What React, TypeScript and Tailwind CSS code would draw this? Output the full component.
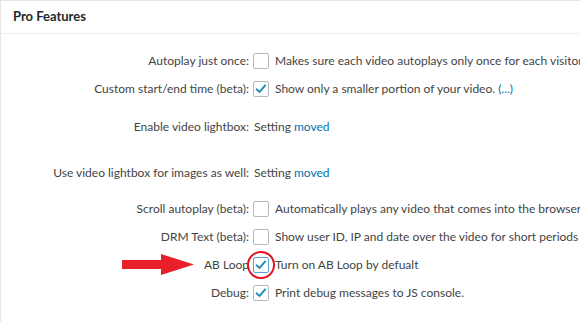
import * as React from "react";

type Row = {
  label: string;
  checked?: boolean;
  text?: string;
  more?: boolean;
  moved?: boolean;
  gap: string;
  focus?: boolean;
};

const ROWS: Row[] = [
  { label: "Autoplay just once:", checked: false, text: "Makes sure each video autoplays only once for each visitor.", gap: "mt-[13px]" },
  { label: "Custom start/end time (beta):", checked: true, text: "Show only a smaller portion of your video.", more: true, gap: "mt-0" },
  { label: "Enable video lightbox:", moved: true, gap: "mt-[10px]" },
  { label: "Use video lightbox for images as well:", moved: true, gap: "mt-[18px]" },
  { label: "Scroll autoplay (beta):", checked: false, text: "Automatically plays any video that comes into the browser viewport.", gap: "mt-[8px]" },
  { label: "DRM Text (beta):", checked: false, text: "Show user ID, IP and date over the video for short periods of time.", gap: "mt-0" },
  { label: "AB Loop", checked: true, text: "Turn on AB Loop by defualt", gap: "mt-0", focus: true },
  { label: "Debug:", checked: true, text: "Print debug messages to JS console.", gap: "mt-0" },
];

function Checkbox({ checked, focus }: { checked?: boolean; focus?: boolean }) {
  return (
    <span
      className={
        "relative flex h-4 w-4 shrink-0 items-center justify-center rounded-[2px] border bg-white " +
        (focus ? "border-[#5b9dd9]" : "border-[#b4b9be]")
      }
    >
      {checked && (
        <svg viewBox="0 0 16 16" className="h-[14px] w-[14px]">
          <path d="M3.2 8.4 L6.4 11.4 L12.6 4" fill="none" stroke="#1e8cbe" strokeWidth="2.2" strokeLinecap="square" />
        </svg>
      )}
      {focus && (
        <span className="pointer-events-none absolute left-1/2 top-1/2 h-[28px] w-[28px] -translate-x-1/2 -translate-y-1/2 rounded-full border-[2.5px] border-[#e0141e]" />
      )}
    </span>
  );
}

function Arrow() {
  return (
    <svg width="74" height="22" viewBox="0 0 74 22" className="absolute left-[120px] top-1/2 -translate-y-1/2">
      <polygon points="1,6 40,6 40,0 73,10.5 40,21 40,15 1,15" fill="#e8202a" />
    </svg>
  );
}

export default function App() {
  return (
    <div
      className="h-[322px] w-[580px] overflow-hidden border-l border-t border-[#e5e5e5] bg-white text-[12px] text-[#444]"
      style={{ fontFamily: 'Lato, "Open Sans", sans-serif' }}
    >
      {/* Header */}
      <div className="flex h-[33px] items-center border-b border-[#eeeeee] px-3">
        <h2 className="text-[13px] font-bold text-[#23282d]">Pro Features</h2>
      </div>

      {/* Settings */}
      <div className="flex flex-col">
        {ROWS.map((r) => (
          <div key={r.label} className={"relative flex h-7 items-center " + r.gap}>
            {r.focus && <Arrow />}
            <div className="w-[250px] shrink-0 whitespace-nowrap pr-[2px] text-right">{r.label}</div>
            {r.moved ? (
              <div className="whitespace-nowrap pl-[3px]">
                Setting <span className="text-[#0073aa]">moved</span>
              </div>
            ) : (
              <div className="flex items-center gap-[6px] whitespace-nowrap pl-[2px]">
                <Checkbox checked={r.checked} focus={r.focus} />
                <span>
                  {r.text}
                  {r.more && <span className="text-[#0073aa]"> (...)</span>}
                </span>
              </div>
            )}
          </div>
        ))}
      </div>
    </div>
  );
}
